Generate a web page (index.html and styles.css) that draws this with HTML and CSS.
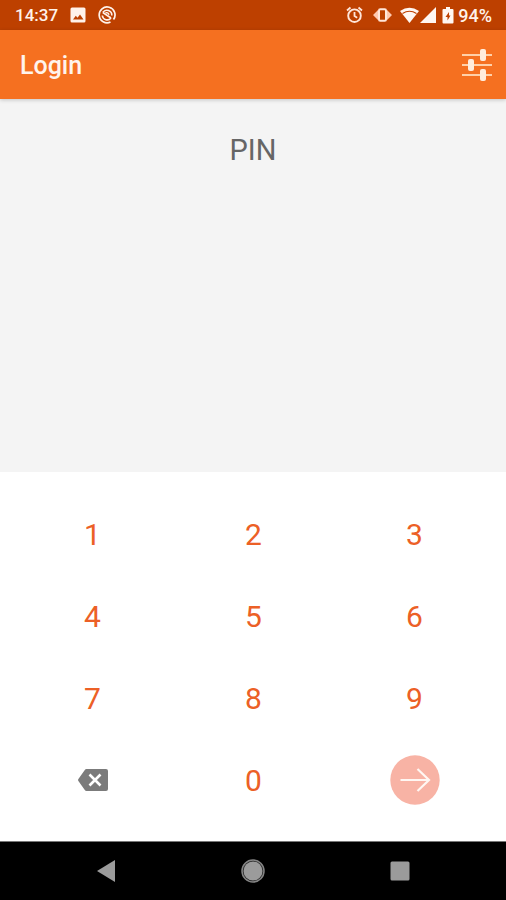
FILE: index.html
```html
<!DOCTYPE html>
<html lang="en">
<head>
<meta charset="utf-8">
<meta name="viewport" content="width=device-width, initial-scale=1">
<title>Login</title>
<link rel="stylesheet" href="styles.css">
</head>
<body>
<div class="status-bar">
  <div class="status-left">
    <span class="clock">14:37</span>
    <svg width="16" height="16" viewBox="0 0 16 16" aria-hidden="true"><path fill="#fff2ea" fill-rule="evenodd" d="M2 0.5h12a1.5 1.5 0 0 1 1.500 1.500v12a1.500 1.500 0 0 1-1.500 1.500H2A1.500 1.500 0 0 1 .5 14V2A1.500 1.500 0 0 1 2 .5zM3 12.500h10.500L10 7.500l-2.500 3.200-1.700-2z"/></svg>
    <svg width="18" height="18" viewBox="0 0 18 18" fill="none" stroke="#fff2ea" aria-hidden="true"><path stroke-width="1.700" d="M12.500 16A7.900 7.900 0 1 1 15.500 13.500"/><path stroke-width="1.600" d="M4.800 6.500A4.900 4.900 0 0 1 13.800 9.500M13 12a4.900 4.900 0 0 1-8.700-2.500M4.800 6.500l8.200 5.500"/><path stroke-width="1.500" d="M7.500 6.800c1.500-.5 3 .2 3.500 2"/></svg>
  </div>
  <div class="status-right">
    <svg width="17" height="18" viewBox="0 0 17 18" fill="none" stroke="#ffe6da" aria-hidden="true"><circle cx="8.500" cy="9.700" r="6.300" stroke-width="1.900"/><path stroke-width="1.800" d="M8.500 6v4l2.700 1.700M1 4.500L4.500 1.500M16 4.500l-3.500-3"/></svg>
    <svg class="vibrate" width="19" height="16" viewBox="0 0 19 16" aria-hidden="true"><path fill="#ffc9b0" d="M5 3v10L0 8zM14 3v10l5-5z"/><rect x="6" y="2.300" width="7" height="11.400" rx="1.300" fill="#bd4000" stroke="#ffe6da" stroke-width="2"/></svg>
    <svg width="38" height="18" viewBox="0 0 38 18" aria-hidden="true"><path fill="#fff7f2" d="M0 5Q9.500-1.500 19 5L9.500 17z"/><path fill="none" stroke="#bd4000" stroke-width="1.200" d="M2.500 7.500Q9.500 3 16.500 7.500"/><path fill="#fff7f2" d="M36 1v16H20z"/></svg>
    <svg class="charge" width="12" height="17" viewBox="0 0 12 17" aria-hidden="true"><path fill="#fff7f2" d="M4 0h4v2h2.500a1 1 0 0 1 1 1v12.500a1 1 0 0 1-1 1h-9a1 1 0 0 1-1-1V3a1 1 0 0 1 1-1H4z"/><path fill="#bd4000" d="M7 5L3.500 10h2v3.500L8.500 8.500H7z"/></svg>
    <span class="battery">94%</span>
  </div>
</div>
<header class="app-bar">
  <h1 class="title">Login</h1>
  <button class="settings" type="button" aria-label="Settings">
    <svg width="30" height="32" viewBox="0 0 30 32" aria-hidden="true"><path stroke="#ffd0a8" stroke-width="2" d="M0 6h30M0 16h30M0 26h30"/><g fill="#ffeddd"><rect x="18" y="0" width="6" height="12" rx="2"/><rect x="6" y="10" width="6" height="12" rx="2"/><rect x="18" y="20" width="6" height="12" rx="2"/></g></svg>
  </button>
</header>
<main class="login">
  <section class="entry"><h2 class="prompt">PIN</h2></section>
  <section class="keypad" aria-label="PIN keypad">
    <button class="key" type="button">1</button>
    <button class="key" type="button">2</button>
    <button class="key" type="button">3</button>
    <button class="key" type="button">4</button>
    <button class="key" type="button">5</button>
    <button class="key" type="button">6</button>
    <button class="key" type="button">7</button>
    <button class="key" type="button">8</button>
    <button class="key" type="button">9</button>
    <button class="key" type="button" aria-label="Delete">
      <svg width="30" height="22" viewBox="0 0 30 22" aria-hidden="true"><path fill="#7b7b7b" d="M8.500 0H28a2 2 0 0 1 2 2v18a2 2 0 0 1-2 2H8.500a2 2 0 0 1-1.700-.9L.4 12a1.800 1.800 0 0 1 0-2L6.800.9A2 2 0 0 1 8.500 0z"/><path stroke="#fff" stroke-width="2.600" d="M11.500 5.500l11 11M22.500 5.500l-11 11"/></svg>
    </button>
    <button class="key" type="button">0</button>
    <button class="key" type="button" aria-label="Continue">
      <svg class="go" width="50" height="50" viewBox="0 0 50 50" aria-hidden="true"><circle cx="25" cy="25" r="24.700" fill="#f8b3a5"/><path fill="none" stroke="#fff7f3" stroke-width="2.200" d="M10.500 25H39M27.500 14l11.500 11-11.500 11"/></svg>
    </button>
  </section>
</main>
<nav class="nav-bar" aria-label="System navigation">
  <button class="nav-button" type="button" aria-label="Back"><svg width="18" height="22" viewBox="0 0 18 22"><path fill="#9b9b9b" d="M18 0v22L0 11z"/></svg></button>
  <button class="nav-button" type="button" aria-label="Home"><svg width="24" height="24" viewBox="0 0 24 24"><circle cx="12" cy="12" r="11" fill="#222" stroke="#858585" stroke-width="1.500"/><circle cx="12" cy="12" r="9.500" fill="#9b9b9b"/></svg></button>
  <button class="nav-button" type="button" aria-label="Recent apps"><svg width="20" height="20" viewBox="0 0 20 20"><rect x=".5" y=".5" width="19" height="19" rx="1.500" fill="#9b9b9b"/></svg></button>
</nav>
</body>
</html>
```
FILE: styles.css
```css
* {
  box-sizing: border-box;
}

body {
  display: flex;
  flex-direction: column;
  min-height: 100vh;
  margin: 0;
  background: #f4f4f4;
  font-family: Roboto, "Liberation Sans", sans-serif;
}

svg {
  display: block;
}

button {
  padding: 0;
  border: 0;
  background: none;
  font: inherit;
  color: inherit;
  cursor: pointer;
}

.status-bar {
  display: flex;
  align-items: center;
  justify-content: space-between;
  height: 30px;
  padding: 0 14px 0 15px;
  background: #bd4000;
  color: #fff2ea;
  font-size: 17px;
  font-weight: 500;
}

.status-left,
.status-right {
  display: flex;
  align-items: center;
}

.status-left {
  gap: 12px;
}

.vibrate {
  margin: 0 8px 0 10px;
}

.charge {
  margin-left: 4px;
}

.battery {
  margin-left: 4px;
  font-size: 18px;
}

.app-bar {
  display: flex;
  align-items: center;
  justify-content: space-between;
  height: 69px;
  padding: 2px 14px 0 20px;
  background: #f57020;
  box-shadow: 0 1px 4px rgba(0, 0, 0, 0.2);
  color: #fff4ec;
}

.title {
  margin: 0;
  font-size: 25px;
  font-weight: 500;
  line-height: 32px;
}

.settings {
  margin-bottom: 2px;
}

.login {
  display: flex;
  flex: 1;
  flex-direction: column;
}

.entry {
  flex: 1;
  padding-top: 33px;
}

.prompt {
  margin: 0;
  color: #666;
  font-size: 29px;
  font-weight: 400;
  line-height: 36px;
  text-align: center;
}

.keypad {
  display: grid;
  grid-template-columns: repeat(3, 1fr);
  grid-auto-rows: 82px;
  padding: 21px 11px 20px 12px;
  background: #fff;
  color: #ec6026;
  font-size: 30px;
}

.key {
  display: flex;
  align-items: center;
  justify-content: center;
}

.nav-bar {
  display: grid;
  grid-template-columns: repeat(3, 1fr);
  height: 59px;
  padding: 0 33px;
  border-top: 1px solid #777;
  background: #000;
}

.nav-button {
  display: flex;
  align-items: center;
  justify-content: center;
}
```
